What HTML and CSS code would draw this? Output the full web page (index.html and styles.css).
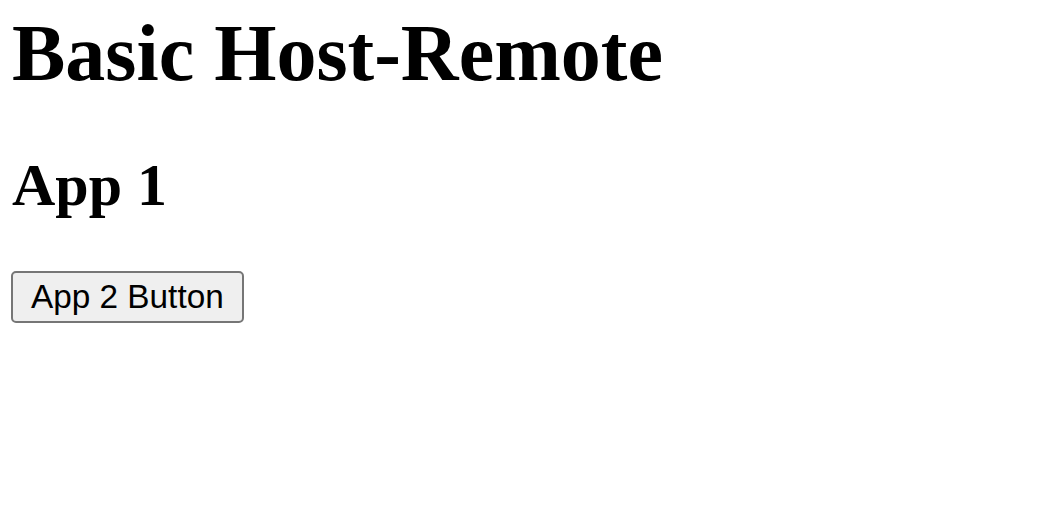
FILE: index.html
```html
<!DOCTYPE html>
<html>
<head>
<meta charset="utf-8">
<link rel="stylesheet" href="styles.css">
</head>
<body>
<h1 class="title">Basic Host-Remote</h1>
<h2 class="subtitle">App 1</h2>
<button class="btn">App 2 Button</button>
</body>
</html>
```
FILE: styles.css
```css
html, body { margin: 0; padding: 0; }
body {
  padding: 8px 12px 12px 12px;
  font-family: "Liberation Serif", serif;
  background: #fff;
  color: #000;
}
.title {
  font-size: 80px;
  font-weight: bold;
  margin: 0 0 52px 0;
}
.subtitle {
  font-size: 60px;
  font-weight: bold;
  margin: 0 0 51px 0;
}
.btn {
  display: block;
  font-family: "Liberation Sans", sans-serif;
  font-size: 33.33px;
  padding: 5px 18px;
  margin-left: -1px;
  border: 2px solid #767676;
  border-radius: 5px;
  background: #efefef;
  color: #000;
}
```
